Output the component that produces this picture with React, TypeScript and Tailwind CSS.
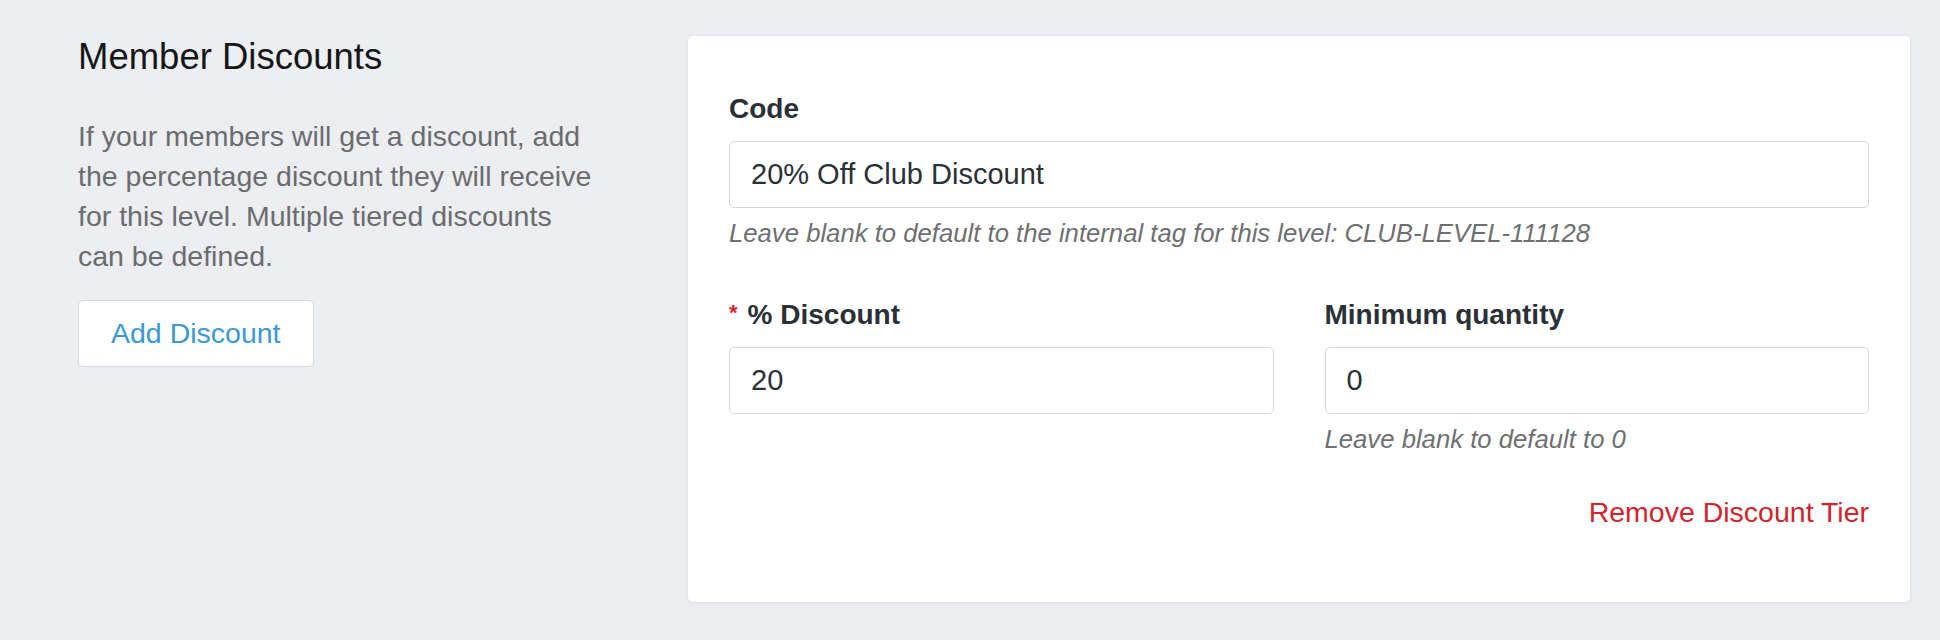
import React, { useState } from "react";

const font = "font-['Helvetica_Neue','Liberation_Sans',Arial,sans-serif]";

function Field({
	label,
	value,
	help,
	required,
	onChange,
}: {
	label: string;
	value: string;
	help?: string;
	required?: boolean;
	onChange: (v: string) => void;
}) {
	return (
		<div className="flex-1 min-w-0">
			<label className="block text-[28px] leading-[40px] font-bold text-[#2b3037] mb-[12px]">
				{required && (
					<span className="text-[#d4262b] text-[22px] align-top leading-[36px] mr-[10px]">*</span>
				)}
				{label}
			</label>
			<input
				type="text"
				value={value}
				onChange={(e) => onChange(e.target.value)}
				className="w-full h-[67px] px-[21px] border border-[#d3dbe2] rounded-[5px] bg-white text-[29px] text-[#2b3037] focus:outline-none"
			/>
			{help && (
				<p className="mt-[7px] text-[25.7px] leading-[36px] italic text-[#6f6f72]">{help}</p>
			)}
		</div>
	);
}

export default function App() {
	const [code, setCode] = useState("20% Off Club Discount");
	const [discount, setDiscount] = useState("20");
	const [minQty, setMinQty] = useState("0");

	return (
		<main className={`min-h-screen bg-[#eceef2] flex pl-[78px] pr-[30px] pt-[36px] pb-[38px] ${font}`}>
			{/* Left description */}
			<section className="w-[610px] shrink-0">
				<h2 className="text-[36.5px] leading-[42px] text-[#151617]">Member Discounts</h2>
				<p className="mt-[38px] w-[518px] text-[28.5px] leading-[40px] text-[#6b6c6e]">
					If your members will get a discount, add the percentage discount they will receive for
					this level. Multiple tiered discounts can be defined.
				</p>
				<button
					type="button"
					className="mt-[24px] h-[67px] px-[32px] bg-white border border-[#d3dbe2] rounded-[5px] text-[28.5px] text-[#3a98d6]"
				>
					Add Discount
				</button>
			</section>

			{/* Discount tier card */}
			<section className="flex-1 bg-white rounded-[5px] shadow-[0_1px_4px_rgba(0,0,0,0.08)] px-[41px] pt-[53px] pb-[70px]">
				<Field
					label="Code"
					value={code}
					onChange={setCode}
					help="Leave blank to default to the internal tag for this level: CLUB-LEVEL-111128"
				/>
				<div className="flex gap-[51px] mt-[44px]">
					<Field label="% Discount" value={discount} onChange={setDiscount} required />
					<Field
						label="Minimum quantity"
						value={minQty}
						onChange={setMinQty}
						help="Leave blank to default to 0"
					/>
				</div>
				<div className="flex justify-end mt-[35px]">
					<button type="button" className="text-[28.5px] leading-[40px] text-[#d1242b]">
						Remove Discount Tier
					</button>
				</div>
			</section>
		</main>
	);
}
